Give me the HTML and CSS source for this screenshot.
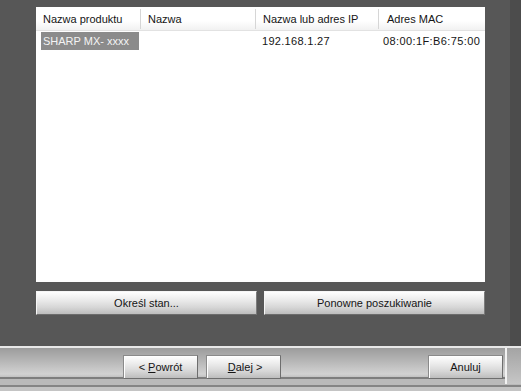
FILE: index.html
```html
<!DOCTYPE html>
<html lang="pl">
<head>
    <meta charset="UTF-8">
    <title>Wyszukiwanie drukarki</title>
    <link rel="stylesheet" href="styles.css">
</head>
<body>
    <div class="window">
        <div class="content">
            <div class="list">
                <div class="list-head">
                    <div class="col">Nazwa produktu</div>
                    <div class="col">Nazwa</div>
                    <div class="col">Nazwa lub adres IP</div>
                    <div class="col col-last">Adres MAC</div>
                </div>
                <div class="list-row">
                    <div class="cell cell-first"><span class="selected">SHARP MX- xxxx</span></div>
                    <div class="cell"></div>
                    <div class="cell cell-ip">192.168.1.27</div>
                    <div class="cell cell-mac">08:00:1F:B6:75:00</div>
                </div>
            </div>
            <div class="actions">
                <button class="btn btn-wide">Określ stan...</button>
                <button class="btn btn-wide">Ponowne poszukiwanie</button>
            </div>
        </div>
        <div class="footer">
            <div class="nav">
                <button class="btn btn-nav">&lt; <u>P</u>owrót</button>
                <button class="btn btn-nav">&nbsp;<u>D</u>alej &gt;</button>
            </div>
            <button class="btn btn-nav">Anuluj</button>
            <div class="edge"></div>
        </div>
    </div>
</body>
</html>
```

FILE: styles.css
```css
body {
    margin: 0;
    background: #575757;
    font-family: "Liberation Sans", Arial, sans-serif;
    font-size: 11px;
    color: #151515;
    overflow: hidden;
}

.window {
    width: 521px;
    height: 391px;
    display: flex;
    flex-direction: column;
}

.content {
    flex: 1;
    padding: 7px 0 0 36px;
    background: linear-gradient(to right, #575757 0, #575757 510px, #4c4c4c 510px);
}

.list {
    width: 449px;
    height: 275px;
    background: #fff;
}

.list-head {
    display: grid;
    grid-template-columns: 105px 115px 123px 106px;
    height: 24px;
    background: linear-gradient(#ffffff, #ffffff 60%, #f1f1f1);
    border-bottom: 1px solid #e2e2e2;
    box-sizing: border-box;
}

.col {
    padding-left: 7px;
    border-right: 1px solid #d6d6d6;
    margin: 2px 0 1px;
    line-height: 20px;
}

.col-last {
    border-right: 0;
    padding-left: 8px;
}

.list-row {
    display: grid;
    grid-template-columns: 105px 115px 123px 106px;
    height: 18px;
    margin-top: 1px;
    line-height: 18px;
}

.cell-first {
    padding-left: 5px;
}

.selected {
    display: inline-block;
    width: 96px;
    padding-left: 2px;
    background: #8b8b8b;
    color: #f4f4f4;
}

.cell-ip {
    padding-left: 6px;
    letter-spacing: 0.3px;
}

.cell-mac {
    padding-left: 4px;
    letter-spacing: 0.4px;
    white-space: nowrap;
}

.actions {
    display: flex;
    gap: 7px;
    width: 449px;
    margin-top: 9px;
}

.btn {
    font-family: "Liberation Sans", Arial, sans-serif;
    font-size: 11px;
    color: #151515;
    height: 24px;
    padding: 0;
    border: 1px solid;
    border-color: #f6f6f6 #7c7c7c #6c6c6c #f6f6f6;
    background: linear-gradient(#ffffff, #ececec 35%, #d6d6d6 70%, #bdbdbd);
    box-sizing: border-box;
}

.btn-wide {
    width: 221px;
}

.btn-nav {
    width: 75px;
    border-color: #8a8a8a #6e6e6e #6e6e6e #8a8a8a;
    box-shadow: inset 1px 1px 0 #ffffff;
}

.footer {
    height: 45px;
    display: flex;
    align-items: flex-start;
    padding: 9px 0 0 123px;
    box-sizing: border-box;
    background: linear-gradient(#e8e8e8 0, #e8e8e8 2px, #9c9c9c 2px, #b4b4b4 14px, #d2d2d2 28px, #c2c2c2 31px, #7e7e7e 31px, #7e7e7e 33px, #bababa 33px, #bababa 39px, #858585 39px, #858585 41px, #c4c4c4 41px);
}

.nav {
    display: flex;
    gap: 8px;
    flex: 1;
}

.footer > .btn-nav {
    margin-right: 2px;
}

.edge {
    width: 14px;
    height: 36px;
    margin-top: -7px;
    border-left: 2px solid #f2f2f2;
    background: linear-gradient(#a4a4a4, #c6c6c6);
}
```
